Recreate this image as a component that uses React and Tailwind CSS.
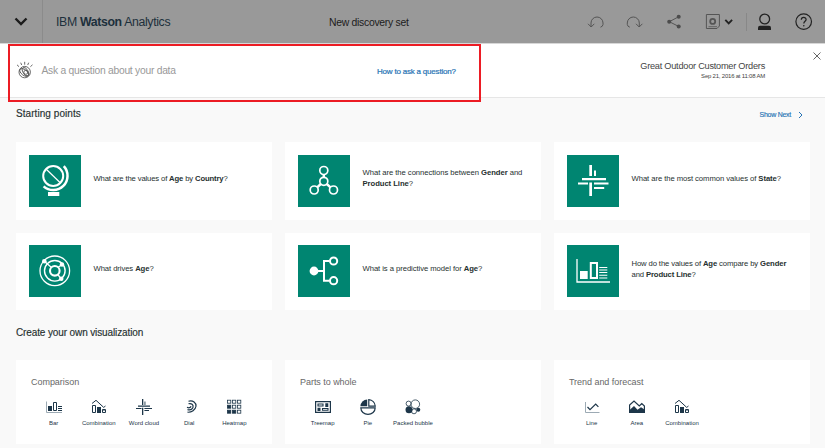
import React from "react";

const NAVY = "#1d3649";

function Globe() {
  return (
    <svg className="h-[52px] w-[52px]" viewBox="0 0 52 52" fill="none" stroke="#fff">
      <circle cx="24.2" cy="21" r="10" strokeWidth="2" />
      <path d="M17 14 31.5 28" strokeWidth="1.2" />
      <path d="M34.8 11.2A14.3 14.3 0 0 1 14.6 31.4" strokeWidth="2.5" />
      <path d="M19 39H30.3" strokeWidth="4" />
    </svg>
  );
}

function Connections() {
  return (
    <svg className="h-[52px] w-[52px]" viewBox="0 0 52 52" fill="none" stroke="#fff" strokeWidth="1.7">
      <circle cx="25.8" cy="15.5" r="4" />
      <circle cx="25.8" cy="26.3" r="4" />
      <circle cx="16.2" cy="35" r="4" />
      <circle cx="35.5" cy="35" r="4" />
      <path d="M25.8 19.5V22.3M22.8 29 19.2 32.3M28.8 29 32.5 32.3" strokeWidth="2.4" />
    </svg>
  );
}

function Cloud() {
  return (
    <svg className="h-[52px] w-[52px]" viewBox="0 0 52 52" fill="#fff">
      <path d="M22.3 10H25V21H22.3zM27 15.5H29V21H27zM15 23H39V25.2H15zM11 27.5H21V29.5H11zM22.3 27.5H25V41H22.3zM27 27.5H41.5V29.5H27zM27 32H37.2V34H27z" />
    </svg>
  );
}

function Orbit() {
  return (
    <svg className="h-[52px] w-[52px]" viewBox="0 0 52 52" fill="none" stroke="#fff">
      <circle cx="25.8" cy="25.8" r="14.8" strokeWidth="1.3" />
      <circle cx="25.8" cy="25.8" r="10.3" strokeWidth="1.4" />
      <circle cx="25.8" cy="25.8" r="4.8" strokeWidth="2.1" />
      <path d="M15.3 16.3 22.5 22.5M29.3 22.3 33 19.5M28.8 29.5 32.3 34" strokeWidth="1.3" />
      <g fill="#fff" stroke="none">
        <circle cx="15.3" cy="16.3" r="2.3" />
        <circle cx="33" cy="19.5" r="2.2" />
        <circle cx="32.3" cy="33.8" r="2.2" />
      </g>
    </svg>
  );
}

function Predict() {
  return (
    <svg className="h-[52px] w-[52px]" viewBox="0 0 52 52" fill="none" stroke="#fff" strokeWidth="2">
      <circle cx="16" cy="26" r="4.4" fill="#fff" stroke="none" />
      <path d="M19 26H26M31.5 16H26V35.7H31.5" />
      <circle cx="35.6" cy="16" r="3.6" />
      <circle cx="35.6" cy="35.7" r="3.6" />
    </svg>
  );
}

function Compare() {
  return (
    <svg className="h-[52px] w-[52px]" viewBox="0 0 52 52" fill="none" stroke="#fff">
      <path d="M10 14V37H43" strokeWidth="1.3" />
      <path d="M13 26H20.7V34H13z" fill="#fff" stroke="none" />
      <path d="M23.8 18H30V33H23.8z" strokeWidth="2" />
      <path d="M32.2 22.5H40.3M32.2 25H40.3M32.2 27.5H40.3M32.2 30.3H40.3M32.2 33H40.3" strokeWidth="1.1" />
    </svg>
  );
}

function BarIcon() {
  return (
    <svg className="h-4 w-4" viewBox="0 0 16 16" fill="none" stroke={NAVY}>
      <path d="M.5 2.5V13.5H16" stroke="#9caab4" />
      <path d="M2 7H6V12H2z" fill={NAVY} stroke="none" />
      <path d="M7.5 3.5H10.5V11.5H7.5z" strokeWidth="1" />
      <path d="M12 7.5H16M12 9.5H16M12 11.5H16" strokeWidth="1" />
    </svg>
  );
}

function CombinationIcon() {
  return (
    <svg className="h-4 w-4" viewBox="0 0 16 16" fill="none" stroke={NAVY}>
      <path d="M1 4.5 5 1.3 12.7 8.4 14.5 7" strokeWidth="1" />
      <path d="M1.5 6.5H4.5V13.5H1.5z" strokeWidth="1" />
      <path d="M6 8H10V14H6z" fill={NAVY} stroke="none" />
      <path d="M11.5 10.5H14.5V13.5H11.5z" />
      <path d="M13 10.5V12" />
    </svg>
  );
}

function CloudIcon() {
  return (
    <svg className="h-4 w-4" viewBox="0 0 16 16" fill={NAVY}>
      <path d="M6 0H7.3V6H6zM8.5 2.5H9.4V6H8.5zM2 6.6H14V7.8H2zM0 9H5.5V10H0zM6 8.8H7.3V16H6zM8.4 9H16V10H8.4zM8.4 11H13V12H8.4z" />
    </svg>
  );
}

function DialIcon() {
  return (
    <svg className="h-4 w-4" viewBox="0 0 16 16" fill="none" stroke={NAVY} strokeWidth="1.2">
      <path d="M7.5 2.2C12 .8 15.4 4 15 7.3 14.5 11 10.5 13.5 6.5 13.2" />
      <path d="M7.5 4.8C10.5 3.8 12.6 6 12 8.2 11.3 10.2 9 11.2 6.5 10.6" />
      <path d="M10 7.2C9.5 8.8 7.8 9.2 6 8.3" />
    </svg>
  );
}

const heatCells = [
  [0, 0, 0],
  [1, 0, 0],
  [1, 1, 0],
];

function HeatmapIcon() {
  return (
    <svg className="h-4 w-4" viewBox="0 0 16 16" stroke={NAVY} strokeWidth=".8">
      {heatCells.map((row, y) =>
        row.map((on, x) => (
          <rect key={`${x}-${y}`} x={1.5 + x * 5} y={1.2 + y * 5} width="3.3" height="3" fill={on ? NAVY : "#fff"} />
        ))
      )}
    </svg>
  );
}

function TreemapIcon() {
  return (
    <svg className="h-4 w-4" viewBox="0 0 16 16" fill="none" stroke={NAVY}>
      <path d="M.6 2.6H15.4V13.4H.6z" strokeWidth="1.2" />
      <path d="M3 5H8V7H3zM7.5 9.5H13V11.3H7.5z" strokeWidth="1.1" />
      <path d="M10.3 4.3H13.3V8H10.3zM2.5 8.8H5.5V12H2.5z" fill={NAVY} stroke="none" />
    </svg>
  );
}

function PieIcon() {
  return (
    <svg className="h-4 w-4" viewBox="0 0 16 16" fill="none" stroke={NAVY} strokeWidth="1.2">
      <path d="M8.8.7A7.2 7.2 0 0 1 15.3 7.2H8.8z" />
      <path d="M.8 8.8H15.2A7.2 6.6 0 0 1 .8 8.8z" />
      <path d="M7.2.4V7.2H.4A7.2 7.2 0 0 1 7.2.4z" fill={NAVY} stroke="none" />
    </svg>
  );
}

function BubbleIcon() {
  return (
    <svg className="h-4 w-4" viewBox="0 0 16 16" fill="none" stroke={NAVY} strokeWidth=".8">
      <circle cx="3.6" cy="4.6" r="2.5" />
      <circle cx="10.3" cy="5.2" r="4.3" />
      <circle cx="4" cy="10.7" r="3.5" fill={NAVY} stroke="none" />
      <circle cx="9" cy="12.3" r="2.5" />
      <circle cx="13.3" cy="10.8" r="2" fill={NAVY} stroke="none" />
    </svg>
  );
}

function LineIcon() {
  return (
    <svg className="h-4 w-4" viewBox="0 0 16 16" fill="none" stroke={NAVY}>
      <path d="M1.5 3V13.5H15.5" stroke="#9caab4" />
      <path d="M3.5 8 6 10.7 11.7 5 14.4 7.8" strokeWidth="1.2" />
    </svg>
  );
}

function AreaIcon() {
  return (
    <svg className="h-4 w-4" viewBox="0 0 16 16" fill="none" stroke={NAVY}>
      <path d="M.6 13.4V6L5 2 10.3 7 12.8 4.5 15.4 7V13.4z" strokeWidth="1.2" />
      <path d="M.6 11 5 7 8.5 10.7 12 8.3 15.4 10.5V14H.6z" fill={NAVY} stroke="none" />
    </svg>
  );
}

const questions = [
  { icon: Globe, tracking: "tracking-[-0.15px]", text: <>What are the values of <b>Age</b> by <b>Country</b>?</> },
  { icon: Connections, tracking: "tracking-[-0.06px]", text: <>What are the connections between <b>Gender</b> and<br /><b>Product Line</b>?</> },
  { icon: Cloud, tracking: "tracking-[-0.075px]", text: <>What are the most common values of <b>State</b>?</> },
  { icon: Orbit, tracking: "tracking-[-0.09px]", text: <>What drives <b>Age</b>?</> },
  { icon: Predict, tracking: "tracking-[-0.07px]", text: <>What is a predictive model for <b>Age</b>?</> },
  { icon: Compare, tracking: "tracking-[-0.12px]", text: <>How do the values of <b>Age</b> compare by <b>Gender</b><br />and <b>Product Line</b>?</> },
];

const groups = [
  {
    title: "Comparison",
    items: [["Bar", BarIcon], ["Combination", CombinationIcon], ["Word cloud", CloudIcon], ["Dial", DialIcon], ["Heatmap", HeatmapIcon]],
  },
  { title: "Parts to whole", items: [["Treemap", TreemapIcon], ["Pie", PieIcon], ["Packed bubble", BubbleIcon]] },
  { title: "Trend and forecast", items: [["Line", LineIcon], ["Area", AreaIcon], ["Combination", CombinationIcon]] },
];

function Header() {
  return (
    <header className="flex h-[43px] items-center bg-[#999] text-[#1c1c1c]">
      <div className="flex h-full w-[43px] items-center border-r border-[#8b8b8b] pl-[14px]">
        <svg className="h-3 w-[14px]" viewBox="0 0 14 12" fill="none" stroke="#1b1b1b" strokeWidth="2.4">
          <path d="M1.5 2.5 7 8 12.5 2.5" />
        </svg>
      </div>
      <h1 className="w-[286px] pt-px pl-[13px] text-[12.3px] tracking-[-0.35px] text-[#1d303c]">
        IBM <b>Watson</b> Analytics
      </h1>
      <span className="w-[258px] pt-[2px] text-[10.4px] tracking-[-0.28px]">New discovery set</span>
      <svg className="h-5 w-[238px]" viewBox="587 11 238 20" fill="none" stroke="#555">
        <path d="M591 26V22A6 6 0 0 1 603 22V23.5Q602.8 25.5 600.5 26.2M588 22.8 591.2 26 594.3 22.8" strokeWidth="1" />
        <path d="M639.3 26V22A6 6 0 0 0 627.3 22V23.5Q627.5 25.5 629.8 26.2M636 22.8 639.2 26 642.4 22.8" strokeWidth="1" />
        <path d="M678.8 15.7 669.3 20.7 678.8 25.5" />
        <g fill="#4c4c4c" stroke="none">
          <circle cx="678.7" cy="15.8" r="2" />
          <circle cx="669.2" cy="20.7" r="2" />
          <circle cx="678.7" cy="25.4" r="2" />
        </g>
        <path d="M706.4 13.5H719.4V25L717 27.5H706.4z" />
        <circle cx="712.7" cy="20.4" r="2.5" strokeWidth="1.8" />
        <path d="M708.5 25.7H717" strokeWidth=".8" />
        <path d="M725.3 18.8 728.7 22.3 732.1 18.8" stroke="#222" strokeWidth="1.9" />
        <path d="M746.5 12V30" stroke="#888" />
        <circle cx="764.7" cy="18" r="4.9" stroke="#222" strokeWidth="1.3" />
        <path d="M758 29V26.8Q758 24.8 760 24.8H769Q771 24.8 771 26.8V29z" fill="#222" stroke="none" />
        <circle cx="803.7" cy="20.6" r="7.8" stroke="#222" strokeWidth="1.2" />
        <path d="M801.3 18.8C801.3 15.5 806.2 15.7 806.1 18.6 806 20.2 803.8 20.5 803.8 22.5" stroke="#222" strokeWidth="1.2" />
        <circle cx="803.8" cy="24.8" r=".8" fill="#222" stroke="none" />
      </svg>
    </header>
  );
}

function WatsonIcon() {
  return (
    <svg className="mb-px h-[18px] w-[18px]" viewBox="0 0 18 18" fill="none" stroke="#444" strokeWidth=".8">
      <circle cx="8.7" cy="11.1" r="5.7" />
      <ellipse cx="8.2" cy="11.5" rx="5.2" ry="2.8" transform="rotate(38 8.2 11.5)" />
      <ellipse cx="9.5" cy="10.7" rx="2.5" ry="4.6" transform="rotate(-30 9.5 10.7)" />
      <circle cx="9.8" cy="11.3" r="2" />
      <path d="M8.7.8V3.7M4.7 1.7 5.7 4M12.7 1.7 11.7 4M1 3.8 3 5.7M16.5 3.8 14.4 5.7" strokeWidth=".8" />
    </svg>
  );
}

export default function App() {
  return (
    <div className="relative flex h-[448px] w-[825px] flex-col overflow-hidden bg-[#f9f9f9] font-['Liberation_Sans',Arial,sans-serif] text-[#26302f]">
      <Header />
      <section className="flex h-[55px] items-center border-y border-t-[#d7d7d7] border-b-[#e6e6e6] bg-white pl-4">
        <WatsonIcon />
        <span className="w-[335px] pl-[7.5px] text-[10.3px] tracking-[-0.26px] text-[#999]">Ask a question about your data</span>
        <a className="w-[263px] pt-0.5 pl-2 text-[8px] tracking-[-0.2px] text-[#2673b4] [-webkit-text-stroke:0.2px]">How to ask a question?</a>
        <div className="w-[133px] text-right text-[#444]">
          <div className="text-[9.2px] leading-[11px] tracking-[-0.24px]">Great Outdoor Customer Orders</div>
          <div className="text-[6px] leading-[9px] tracking-[-0.21px]">Sep 21, 2016 at 11:08 AM</div>
        </div>
        <svg className="mb-[30px] ml-12 h-2 w-2 shrink-0" viewBox="0 0 8 8" stroke="#666" strokeWidth="1">
          <path d="M.5.5 7.5 7.5M7.5.5.5 7.5" />
        </svg>
      </section>
      <main className="px-4">
        <div className="flex h-11 items-start justify-between pt-[9px] pr-[6px]">
          <h2 className="text-[10px] leading-[14px] tracking-[0.06px] [-webkit-text-stroke:0.15px]">Starting points</h2>
          <a className="flex items-center pt-px text-[7px] leading-[14px] tracking-[-0.26px] text-[#2673b4] [-webkit-text-stroke:0.15px]">
            Show Next
            <svg className="ml-[7px] h-2 w-[5px]" viewBox="0 0 5 8" fill="none" stroke="#2673b4">
              <path d="M1 1 4 4 1 7" />
            </svg>
          </a>
        </div>
        <div className="grid grid-cols-[256px_256px_256px] gap-[13px]">
          {questions.map(({ icon: Icon, text, tracking }, i) => (
            <article key={i} className="flex h-[77.5px] items-center bg-white pl-[13px]">
              <div className="h-[52px] w-[52px] shrink-0 bg-[#008571]">
                <Icon />
              </div>
              <p className={`pb-[5px] pl-[12.5px] text-[7.7px] leading-[11px] whitespace-nowrap ${tracking}`}>{text}</p>
            </article>
          ))}
        </div>
        <h2 className="pt-4 pb-5 text-[10px] leading-[14px] tracking-[-0.12px] [-webkit-text-stroke:0.15px]">Create your own visualization</h2>
        <div className="grid grid-cols-[256px_256px_256px] gap-[13px]">
          {groups.map((group) => (
            <article key={group.title} className="h-[84px] bg-white pt-4 pl-[15px]">
              <h3 className="text-[9px] leading-3 tracking-[-0.04px] text-[#686868]">{group.title}</h3>
              <div className="mt-[11px] flex">
                {group.items.map(([label, Icon]) => (
                  <div key={label} className="flex w-[45.2px] flex-col items-center whitespace-nowrap">
                    <Icon />
                    <span className="mt-1 text-[6px] leading-[8px] text-[#1d3649]">{label}</span>
                  </div>
                ))}
              </div>
            </article>
          ))}
        </div>
      </main>
      <div className="absolute top-[44px] left-2 h-[58px] w-[473px] border-2 border-[#ec1c24]" />
    </div>
  );
}
